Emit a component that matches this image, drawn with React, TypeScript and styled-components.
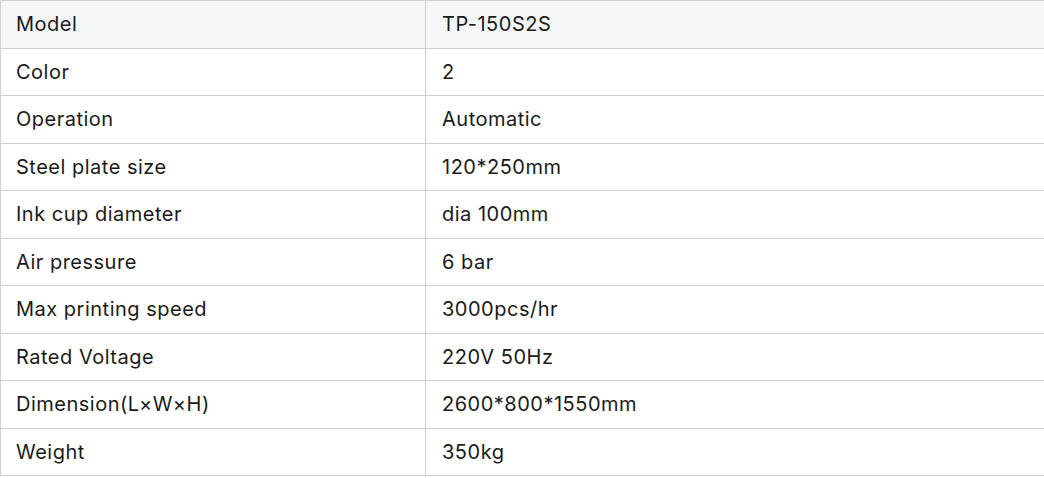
import styled, { createGlobalStyle } from 'styled-components';

const GlobalStyle = createGlobalStyle`
  html, body {
    margin: 0;
    padding: 0;
    background: #fff;
    overflow: hidden;
  }
`;

const SpecTable = styled.table`
  width: 1050px;
  border-collapse: collapse;
  font-family: Inter, 'Liberation Sans', sans-serif;
  font-size: 20px;
  letter-spacing: 0.5px;
  color: #1a1a1a;
  table-layout: fixed;
`;

const Row = styled.tr<{ shaded: boolean }>`
  height: 47.5px;
  background: ${(props) => (props.shaded ? '#f5f6f8' : '#fff')};
`;

const Cell = styled.td`
  border: 1px solid #cfcfcf;
  padding: 0 16px;
  vertical-align: middle;
  white-space: nowrap;
`;

const LabelCell = styled(Cell)`
  width: 393px;
  padding-left: 15px;
`;

const specs = [
  ['Model', 'TP-150S2S'],
  ['Color', '2'],
  ['Operation', 'Automatic'],
  ['Steel plate size', '120*250mm'],
  ['Ink cup diameter', 'dia 100mm'],
  ['Air pressure', '6 bar'],
  ['Max printing speed', '3000pcs/hr'],
  ['Rated Voltage', '220V 50Hz'],
  ['Dimension(L×W×H)', '2600*800*1550mm'],
  ['Weight', '350kg'],
];

const App = () => {
  return (
    <>
      <GlobalStyle />
      <SpecTable>
        <tbody>
          {specs.map(([label, value], i) => (
            <Row key={label} shaded={i === 0}>
              <LabelCell>{label}</LabelCell>
              <Cell>{value}</Cell>
            </Row>
          ))}
        </tbody>
      </SpecTable>
    </>
  );
};

export default App;
